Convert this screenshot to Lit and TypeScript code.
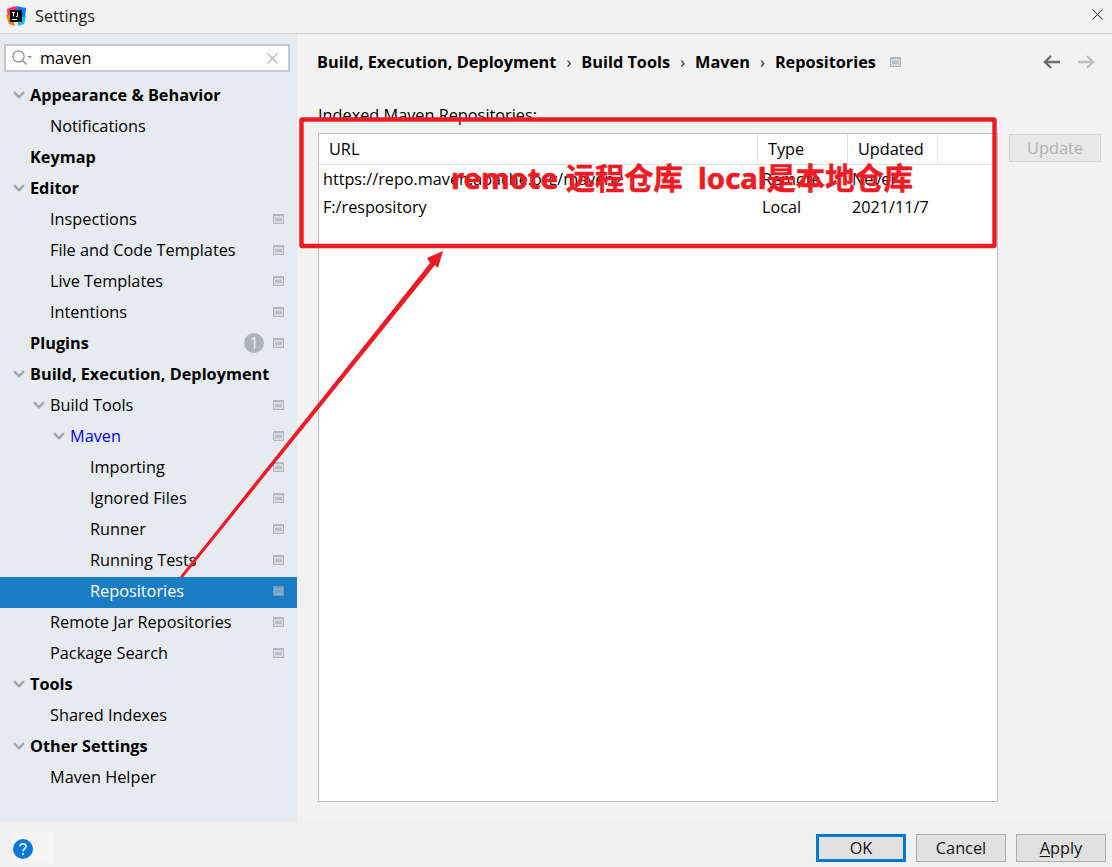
import { LitElement, html, css, svg } from 'lit';
import { customElement } from 'lit/decorators.js';

type Row = { text: string; level: number; bold?: boolean; open?: boolean; pin?: boolean; badge?: string; link?: boolean; selected?: boolean };

const rows: Row[] = [
  { text: 'Appearance & Behavior', level: 0, bold: true, open: true },
  { text: 'Notifications', level: 1 },
  { text: 'Keymap', level: 0, bold: true },
  { text: 'Editor', level: 0, bold: true, open: true },
  { text: 'Inspections', level: 1, pin: true },
  { text: 'File and Code Templates', level: 1, pin: true },
  { text: 'Live Templates', level: 1, pin: true },
  { text: 'Intentions', level: 1, pin: true },
  { text: 'Plugins', level: 0, bold: true, pin: true, badge: '1' },
  { text: 'Build, Execution, Deployment', level: 0, bold: true, open: true },
  { text: 'Build Tools', level: 1, open: true, pin: true },
  { text: 'Maven', level: 2, open: true, pin: true, link: true },
  { text: 'Importing', level: 3, pin: true },
  { text: 'Ignored Files', level: 3, pin: true },
  { text: 'Runner', level: 3, pin: true },
  { text: 'Running Tests', level: 3, pin: true },
  { text: 'Repositories', level: 3, pin: true, selected: true },
  { text: 'Remote Jar Repositories', level: 1, pin: true },
  { text: 'Package Search', level: 1, pin: true },
  { text: 'Tools', level: 0, bold: true, open: true },
  { text: 'Shared Indexes', level: 1 },
  { text: 'Other Settings', level: 0, bold: true, open: true },
  { text: 'Maven Helper', level: 1 },
];

const crumbs = ['Build, Execution, Deployment', 'Build Tools', 'Maven', 'Repositories'];

const repos = [
  { url: 'https://repo.maven.apache.org/maven2', type: 'Remote', updated: 'Never' },
  { url: 'F:/respository', type: 'Local', updated: '2021/11/7' },
];

const pin = html`<svg class="pin" width="11" height="10" viewBox="0 0 11 10"><rect width="11" height="10" fill="#afb8bf"/><rect x="1" y="2" width="9" height="7" fill="#d5dbe0"/><rect x="2" y="4" width="7" height="3" fill="#b9c1c7"/></svg>`;

const chevron = html`<svg class="chev" width="12" height="8" viewBox="0 0 12 8"><path d="M1 1.2 L6 6.2 L11 1.2" fill="none" stroke="#a2a9ae" stroke-width="2.4"/></svg>`;

@customElement('app-root')
export class AppRoot extends LitElement {
  static styles = css`
    :host {
      display: block;
      position: relative;
      width: 1112px;
      height: 867px;
      overflow: hidden;
      background: #f2f2f2;
      color: #000;
      font-family: 'Open Sans', 'Noto Sans', sans-serif;
      font-size: 16.3px;
    }
    .dialog { display: flex; flex-direction: column; height: 867px; }
    .titlebar {
      flex: none;
      height: 31px;
      display: flex;
      align-items: center;
      padding: 0 9px 2px 6px;
      gap: 9px;
      border-bottom: 1px solid #cfcfcf;
      box-sizing: content-box;
      font-size: 16.2px;
      color: #222;
    }
    .titlebar .grow { flex: 1; }
    .titlebar .close { margin-bottom: 3px; }
    .body { flex: 1; display: flex; min-height: 0; }
    .sidebar { flex: none; width: 297px; background: #e6ebf0; padding-top: 10px; box-sizing: border-box; }
    .search {
      margin: 0 7px 9px 4px;
      height: 28px;
      box-sizing: border-box;
      background: #fff;
      border: 2px solid #c4c9cd;
      display: flex;
      align-items: center;
      padding: 0 10px 0 6px;
      gap: 6px;
    }
    .search span { flex: 1; }
    .row {
      height: 31px; box-sizing: border-box; display: flex; align-items: center;
      padding-right: 13px; padding-bottom: 4px; white-space: nowrap; font-size: 16.3px;
    }
    .row.bold { font-weight: 700; }
    .row.link { color: #0000ee; }
    .row.selected { background: #1a7dc4; color: #fff; }
    .row .twist { flex: none; width: 17px; display: flex; align-items: center; justify-content: flex-start; }
    .row .grow { flex: 1; }
    .row.selected .pin { opacity: 0.55; }
    .badge {
      width: 20px; height: 20px; border-radius: 50%; background: #aab4ba; color: #e6ebf0;
      display: flex; align-items: center; justify-content: center; font-size: 17px; font-weight: 400; margin-right: 9px;
    }
    .main { flex: 1; display: flex; flex-direction: column; padding: 0 11px 20px 21px; min-width: 0; }
    .crumbs { flex: none; height: 55px; display: flex; align-items: center; font-weight: 700; white-space: nowrap; margin-left: -1px; }
    .crumbs .sep { font-weight: 400; width: 25px; text-align: center; color: #222; }
    .crumbs .pin { margin-left: 14px; }
    .crumbs .grow { flex: 1; }
    .crumbs .nav { display: flex; gap: 18px; margin-right: 6px; }
    .label { flex: none; height: 38px; display: flex; align-items: flex-end; padding-bottom: 1px; box-sizing: border-box; }
    .content { flex: 1; display: flex; gap: 11px; min-height: 0; margin-top: 6px; }
    .table { flex: none; width: 680px; box-sizing: border-box; background: #fff; border: 1px solid #bdbdbd; }
    .thead { display: flex; height: 31px; border-bottom: 1px solid #e3e3e3; box-sizing: border-box; }
    .thead div { display: flex; align-items: center; padding-left: 10px; box-sizing: border-box; border-right: 1px solid #e3e3e3; height: 30px; }
    .tr { display: flex; height: 28px; align-items: center; font-size: 16.2px; }
    .tr div { box-sizing: border-box; padding-left: 4px; white-space: nowrap; overflow: hidden; }
    .c1 { width: 439px; }
    .c2 { width: 90px; }
    .c3 { width: 90px; }
    .update {
      flex: none; align-self: flex-start; width: 92px; height: 28px; box-sizing: border-box;
      display: flex; align-items: center; justify-content: center;
      background: #e8e8e8; border: 1px solid #d6d6d6; color: #b2b2b2; margin-top: 1px;
    }
    .footer { flex: none; height: 45px; background: #f0f0f0; display: flex; align-items: center; padding: 0 6px 0 12px; gap: 10px; }
    .footer .grow { flex: 1; }
    .helpbox { width: 43px; height: 31px; margin-top: 6px; padding: 7px 0 0 1px; box-sizing: border-box; background: #f4f4f4; }
    .help { display: block; width: 20px; height: 20px; }
    .btn {
      width: 90px; height: 28px; margin-top: 6px; box-sizing: border-box; display: flex; align-items: center; justify-content: center;
      background: #e1e1e1; border: 1px solid #adadad; color: #111;
    }
    .btn.default { border: 3px solid #0078d7; }
    .btn u { text-underline-offset: 2px; }
    .overlay { position: absolute; left: 0; top: 0; pointer-events: none; }
    .note {
      position: absolute; left: 451px; top: 156px; white-space: pre;
      color: #ed1c24; font-weight: 700; font-size: 29.3px; line-height: 44px;
      font-family: 'Noto Sans', 'Noto Sans CJK SC', sans-serif;
      -webkit-text-stroke: 0.6px #ed1c24;
    }
  `;

  renderRow(r: Row) {
    const left = r.open ? 13 + r.level * 20 : 30 + r.level * 20;
    const indent = r.level === 3 ? 90 : left;
    return html`<div class="row ${r.bold ? 'bold' : ''} ${r.link ? 'link' : ''} ${r.selected ? 'selected' : ''}" style="padding-left:${indent}px">
      ${r.open ? html`<span class="twist">${chevron}</span>` : ''}
      <span>${r.text}</span>
      <span class="grow"></span>
      ${r.badge ? html`<span class="badge">${r.badge}</span>` : ''}
      ${r.pin ? pin : ''}
    </div>`;
  }

  render() {
    return html`
      <div class="dialog">
        <div class="titlebar">
          <svg width="20" height="20" viewBox="0 0 20 20">
            <path d="M1 3 L9 0 L13 3 L8 10 L2 12 Z" fill="#fe315d"/>
            <path d="M10 0 L20 2 L19 13 L12 8 Z" fill="#087cfa"/>
            <path d="M0 9 L6 8 L9 20 L3 18 Z" fill="#f97a12"/>
            <path d="M12 14 L20 10 L18 18 L12 20 Z" fill="#07c3f2"/>
            <rect x="4" y="4" width="12" height="12" fill="#000"/>
            <rect x="6" y="13" width="5" height="1" fill="#fff"/>
            <path d="M6 6.5 H9 M7.5 6.5 V10.5 M10 10.5 H11.5 V6.5" fill="none" stroke="#fff" stroke-width="1"/>
          </svg>
          <span>Settings</span>
          <span class="grow"></span>
          <svg class="close" width="11" height="11" viewBox="0 0 11 11"><path d="M0.5 0.5 L10.5 10.5 M10.5 0.5 L0.5 10.5" stroke="#222" stroke-width="1"/></svg>
        </div>
        <div class="body">
          <div class="sidebar">
            <div class="search">
              <svg width="22" height="16" viewBox="0 0 22 16"><circle cx="6.5" cy="6.5" r="5.6" fill="none" stroke="#8a8f93" stroke-width="1.2"/><path d="M10.5 10.5 L14.5 14.5" stroke="#8a8f93" stroke-width="1.5"/><path d="M15.5 6 H20 L17.7 8.5 Z" fill="#8a8f93"/></svg>
              <span>maven</span>
              <svg width="11" height="11" viewBox="0 0 11 11"><path d="M0.5 0.5 L10.5 10.5 M10.5 0.5 L0.5 10.5" stroke="#b4b8bb" stroke-width="1.2"/></svg>
            </div>
            ${rows.map((r) => this.renderRow(r))}
          </div>
          <div class="main">
            <div class="crumbs">
              ${crumbs.map((c, i) => html`${i ? html`<span class="sep">›</span>` : ''}<span>${c}</span>`)}
              ${pin}
              <span class="grow"></span>
              <span class="nav">
                <svg width="17" height="14" viewBox="0 0 17 14"><path d="M17 7 H2 M8 1 L2 7 L8 13" fill="none" stroke="#6e6e6e" stroke-width="2.4"/></svg>
                <svg width="17" height="14" viewBox="0 0 17 14"><path d="M0 7 H15 M9 1 L15 7 L9 13" fill="none" stroke="#c0c0c0" stroke-width="2.4"/></svg>
              </span>
            </div>
            <div class="label">Indexed Maven Repositories:</div>
            <div class="content">
              <div class="table">
                <div class="thead">
                  <div class="c1">URL</div><div class="c2">Type</div><div class="c3">Updated</div>
                </div>
                ${repos.map((r) => html`<div class="tr"><div class="c1">${r.url}</div><div class="c2">${r.type}</div><div class="c3">${r.updated}</div></div>`)}
              </div>
              <div class="update">Update</div>
            </div>
          </div>
        </div>
        <div class="footer">
          <div class="helpbox">
            <svg class="help" viewBox="0 0 20 20"><circle cx="10" cy="10" r="10" fill="#0a78d7"/><path d="M7 7.5 C7 3.8 13 3.8 13 7.5 C13 10 10 9.8 10 12.5" fill="none" stroke="#fff" stroke-width="1.6"/><rect x="9.2" y="14" width="1.6" height="2" fill="#fff"/></svg>
          </div>
          <span class="grow"></span>
          <div class="btn default">OK</div>
          <div class="btn">Cancel</div>
          <div class="btn"><span><u>A</u>pply</span></div>
        </div>
      </div>
      <svg class="overlay" width="1112" height="867" viewBox="0 0 1112 867">
        ${svg`<rect x="301.5" y="119.5" width="693" height="126.5" rx="1" fill="none" stroke="#ed1c24" stroke-width="4.4"/>
        <path d="M180 576.5 L430 263 L427 258 L443 251 L438 268 L435 265 L182.5 578 Z" fill="#ed1c24"/>`}
      </svg>
      <div class="note">remote 远程仓库  local是本地仓库</div>
    `;
  }
}
